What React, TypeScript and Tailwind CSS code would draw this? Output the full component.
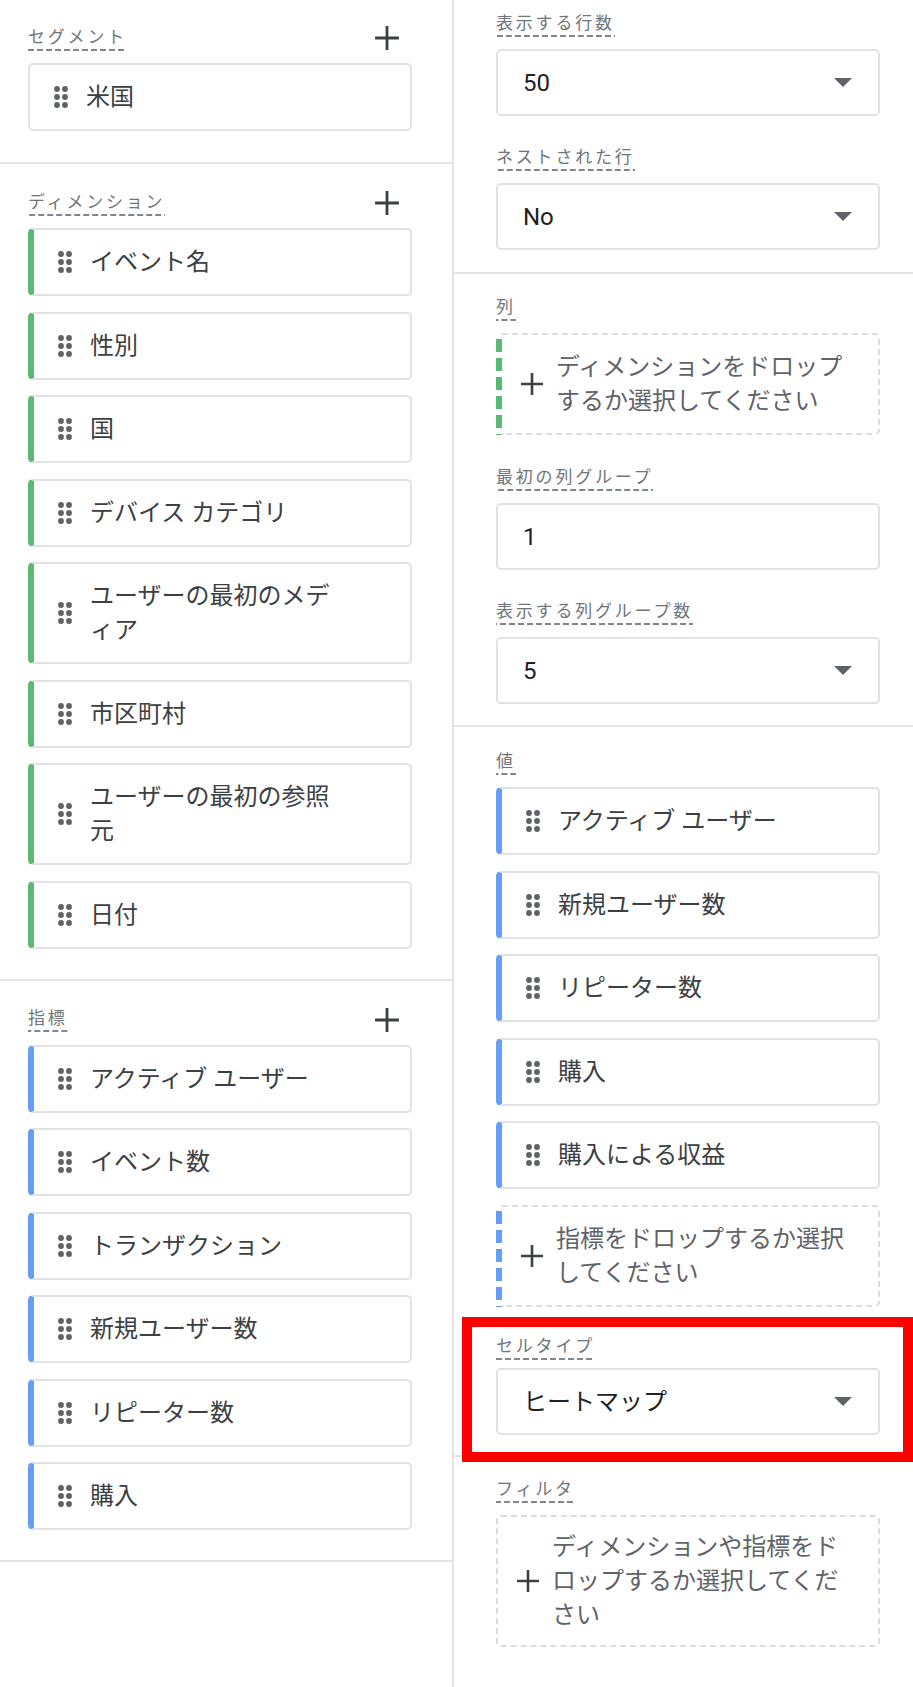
import React from 'react';

type Accent = 'green' | 'blue' | undefined;

function DragIcon() {
  return (
    <svg width="32" height="32" viewBox="0 0 24 24" className="shrink-0" fill="#5f6368">
      <circle cx="9" cy="6" r="2.2" />
      <circle cx="15" cy="6" r="2.2" />
      <circle cx="9" cy="12" r="2.2" />
      <circle cx="15" cy="12" r="2.2" />
      <circle cx="9" cy="18" r="2.2" />
      <circle cx="15" cy="18" r="2.2" />
    </svg>
  );
}

function PlusIcon({ size }: { size: number }) {
  return (
    <svg width={size} height={size} viewBox="0 0 24 24" className="shrink-0">
      <path d="M12 1v22M1 12h22" stroke="#3c4043" strokeWidth="2.6" fill="none" />
    </svg>
  );
}

function Label({ children }: { children: React.ReactNode }) {
  return (
    <div className="flex">
      <span className="inline-block whitespace-nowrap bg-[linear-gradient(to_right,#80868b_66%,transparent_66%)] bg-[length:9px_2px] bg-bottom bg-repeat-x pb-[3px] text-[17px] leading-[22px] tracking-[2.8px] text-[#70757a]">
        {children}
      </span>
    </div>
  );
}

function Chip({ text, accent }: { text: string; accent?: Accent }) {
  const border =
    accent === 'green'
      ? 'border-l-[6px] border-l-[#5bb974]'
      : accent === 'blue'
        ? 'border-l-[6px] border-l-[#669df6]'
        : '';
  return (
    <div
      className={`flex items-center rounded-[5px] border-2 border-[#e0e2e6] bg-white py-[15px] pl-[15px] pr-[68px] ${border}`}
    >
      <DragIcon />
      <span className="ml-[9px] text-[24px] leading-[34px] text-[#3c4043]">{text}</span>
    </div>
  );
}

function Select({ value, caret = true }: { value: string; caret?: boolean }) {
  return (
    <div className="flex h-[67px] items-center justify-between rounded-[5px] border-2 border-[#e0e2e6] bg-white pl-[25px] pr-[26px]">
      <span className="text-[24px] leading-[34px] text-[#202124]">{value}</span>
      {caret && (
        <svg width="18" height="9" viewBox="0 0 18 9">
          <path d="M0 0h18L9 9z" fill="#5f6368" />
        </svg>
      )}
    </div>
  );
}

function DropZone({ text, accent, tall }: { text: string; accent?: Accent; tall?: boolean }) {
  return (
    <div className="flex">
      {accent === 'green' && (
        <div className="w-[6px] shrink-0 bg-[repeating-linear-gradient(to_bottom,transparent_0_6px,#5bb974_6px_19px)]" />
      )}
      {accent === 'blue' && (
        <div className="w-[6px] shrink-0 bg-[repeating-linear-gradient(to_bottom,transparent_0_6px,#669df6_6px_19px)]" />
      )}
      <div
        className={`flex flex-1 items-center border-2 border-dashed border-[#dadce0] pl-[18px] pr-[20px] ${
          accent ? 'rounded-r-[5px] border-l-0' : 'rounded-[5px]'
        } ${tall ? 'py-[13px]' : 'py-[15px]'}`}
      >
        <PlusIcon size={24} />
        <span className="ml-[12px] text-[24px] leading-[34px] text-[#5f6368]">{text}</span>
      </div>
    </div>
  );
}

function HeaderRow({ label }: { label: string }) {
  return (
    <div className="mb-[12px] flex items-center justify-between">
      <Label>{label}</Label>
      <div className="mr-[12px]">
        <PlusIcon size={26} />
      </div>
    </div>
  );
}

const dims = [
  'イベント名',
  '性別',
  '国',
  'デバイス カテゴリ',
  'ユーザーの最初のメディア',
  '市区町村',
  'ユーザーの最初の参照元',
  '日付',
];

const metrics = ['アクティブ ユーザー', 'イベント数', 'トランザクション', '新規ユーザー数', 'リピーター数', '購入'];

const values = ['アクティブ ユーザー', '新規ユーザー数', 'リピーター数', '購入', '購入による収益'];

export default function App() {
  return (
    <div className="flex min-h-[1687px] w-[913px] bg-white font-['Roboto','Noto_Sans_CJK_JP',sans-serif]">
      {/* Left column */}
      <div className="w-[452px] shrink-0">
        <section className="border-b-2 border-[#e3e4e6] pb-[31px] pl-[28px] pr-[40px] pt-[25px]">
          <HeaderRow label="セグメント" />
          <Chip text="米国" />
        </section>
        <section className="border-b-2 border-[#e3e4e6] pb-[30px] pl-[28px] pr-[40px] pt-[26px]">
          <HeaderRow label="ディメンション" />
          <div className="flex flex-col gap-[15.5px]">
            {dims.map((d) => (
              <Chip key={d} text={d} accent="green" />
            ))}
          </div>
        </section>
        <section className="border-b-2 border-[#e3e4e6] pb-[30px] pl-[28px] pr-[40px] pt-[26px]">
          <HeaderRow label="指標" />
          <div className="flex flex-col gap-[15.5px]">
            {metrics.map((d) => (
              <Chip key={d} text={d} accent="blue" />
            ))}
          </div>
        </section>
      </div>

      {/* Right column */}
      <div className="flex-1 border-l-2 border-[#e3e4e6]">
        <section className="border-b-2 border-[#e3e4e6] pb-[22px] pl-[42px] pr-[33px] pt-[12px]">
          <div className="flex flex-col gap-[12px]">
            <Label>表示する行数</Label>
            <Select value="50" />
          </div>
          <div className="mt-[30px] flex flex-col gap-[12px]">
            <Label>ネストされた行</Label>
            <Select value="No" />
          </div>
        </section>

        <section className="border-b-2 border-[#e3e4e6] pb-[21px] pl-[42px] pr-[33px] pt-[22px]">
          <div className="flex flex-col gap-[12px]">
            <Label>列</Label>
            <DropZone text="ディメンションをドロップするか選択してください" accent="green" />
          </div>
          <div className="mt-[31px] flex flex-col gap-[12px]">
            <Label>最初の列グループ</Label>
            <Select value="1" caret={false} />
          </div>
          <div className="mt-[30px] flex flex-col gap-[12px]">
            <Label>表示する列グループ数</Label>
            <Select value="5" />
          </div>
        </section>

        <section className="border-b-2 border-[#e3e4e6] pb-[20px] pl-[42px] pr-[33px] pt-[23px]">
          <div className="flex flex-col gap-[12px]">
            <Label>値</Label>
            <div className="flex flex-col gap-[15.5px]">
              {values.map((v) => (
                <Chip key={v} text={v} accent="blue" />
              ))}
              <DropZone text="指標をドロップするか選択してください" accent="blue" />
            </div>
          </div>
          <div className="relative mt-[28.5px] flex flex-col gap-[8px]">
            <Label>セルタイプ</Label>
            <Select value="ヒートマップ" />
            <div className="pointer-events-none absolute -bottom-[27px] -left-[34px] -right-[33px] -top-[18px] border-[10px] border-[#ff0000]" />
          </div>
        </section>

        <section className="pb-[30px] pl-[42px] pr-[33px] pt-[21px]">
          <div className="flex flex-col gap-[12px]">
            <Label>フィルタ</Label>
            <DropZone text="ディメンションや指標をドロップするか選択してください" tall />
          </div>
        </section>
      </div>
    </div>
  );
}
